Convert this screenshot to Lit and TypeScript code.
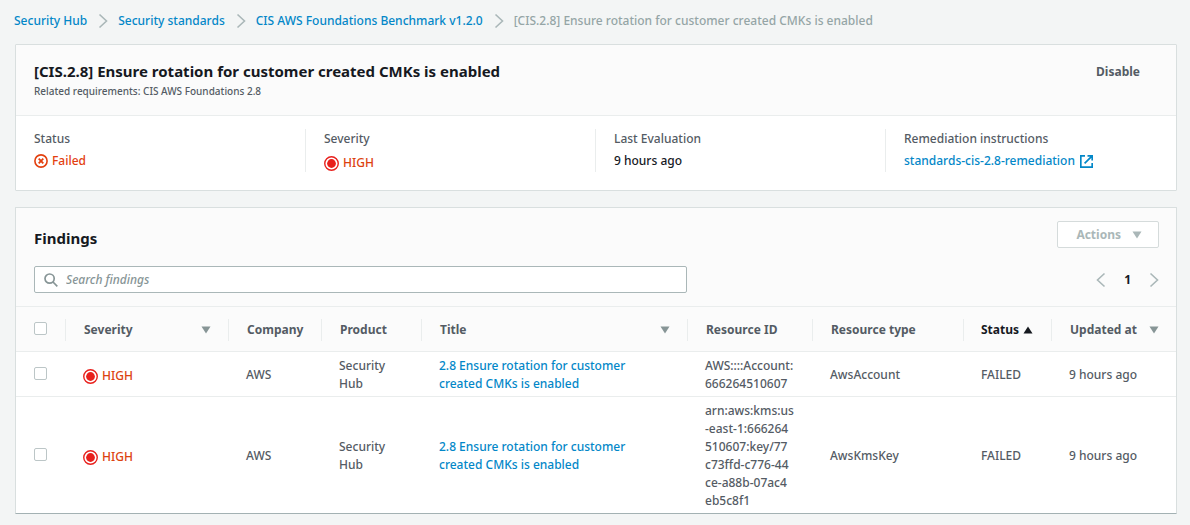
import { LitElement, html, css, svg } from "lit";
import { customElement } from "lit/decorators.js";

interface Finding {
  id: string;
  resource: string[];
  type: string;
}

const findings: Finding[] = [
  { id: "account", resource: ["AWS::::Account:", "666264510607"], type: "AwsAccount" },
  {
    id: "key",
    resource: ["arn:aws:kms:us", "-east-1:666264", "510607:key/77", "c73ffd-c776-44", "ce-a88b-07ac4", "eb5c8f1"],
    type: "AwsKmsKey",
  },
];

const columns = [
  { key: "severity", label: "Severity", sort: "down" },
  { key: "company", label: "Company", sort: "" },
  { key: "product", label: "Product", sort: "" },
  { key: "title", label: "Title", sort: "down" },
  { key: "resource", label: "Resource ID", sort: "" },
  { key: "type", label: "Resource type", sort: "" },
  { key: "status", label: "Status", sort: "up" },
  { key: "updated", label: "Updated at", sort: "down" },
];

const chevron = (dir: "left" | "right") => html`<svg class="chevron" viewBox="0 0 10 16" aria-hidden="true">
  ${dir === "right" ? svg`<path d="M1.5 1.5 8.5 8l-7 6.5" />` : svg`<path d="M8.5 1.5 1.5 8l7 6.5" />`}
</svg>`;

const triangle = (dir: string) => html`<svg class="triangle" viewBox="0 0 10 8" aria-hidden="true">
  ${dir === "up" ? svg`<path d="M.5 7.5 5 .5l4.5 7z" />` : svg`<path d="M.5.5 5 7.5 9.5.5z" />`}
</svg>`;

const high = html`<span class="high">
  <svg class="target" viewBox="0 0 14 14" aria-hidden="true">
    <circle cx="7" cy="7" r="6.3" fill="none" stroke-width="1.3" />
    <circle cx="7" cy="7" r="4.1" class="dot" />
  </svg>HIGH</span>`;

@customElement("app-root")
export class AppRoot extends LitElement {
  static styles = css`
    :host {
      display: block;
      box-sizing: border-box;
      min-height: 100vh;
      padding: 12px 13px 11px 15px;
      background: #f3f5f5;
      color: #16191f;
      font: 500 12px/18px "Noto Sans", "Open Sans", sans-serif;
    }
    * {
      box-sizing: border-box;
    }
    svg {
      display: block;
      flex: none;
    }
    a {
      color: #0387c8;
      text-decoration: none;
    }
    button {
      font: inherit;
      color: inherit;
      background: none;
      border: 0;
      padding: 0;
    }
    h1, h2, p, dl, dd, ol {
      margin: 0;
      padding: 0;
    }
    .crumbs ol {
      display: flex;
      align-items: center;
      margin-left: -1px;
      list-style: none;
      color: #95a5a6;
    }
    .crumbs li {
      display: flex;
      align-items: center;
    }
    .crumbs .chevron {
      margin: 0 10px 0 11px;
    }
    .chevron {
      width: 10px;
      height: 16px;
      fill: none;
      stroke: #aab7b8;
      stroke-width: 1.6;
    }
    .triangle {
      width: 10px;
      height: 8px;
      fill: #879596;
    }
    .panel {
      background: #fff;
      border: 1px solid #d9dfdf;
      border-radius: 1px;
    }
    .summary {
      margin-top: 14px;
    }
    .summary-head {
      display: flex;
      justify-content: space-between;
      align-items: flex-start;
      padding: 16px 36px 14px 18px;
      background: #fbfbfb;
      border-bottom: 1px solid #eaeded;
    }
    h1, h2 {
      font-size: 15px;
      line-height: 20px;
      font-weight: 700;
    }
    .sub {
      font-size: 10px;
      line-height: 20px;
      color: #545b64;
    }
    .disable {
      font-weight: 700;
      line-height: 22px;
      color: #545b64;
    }
    .facts {
      display: grid;
      grid-template-columns: repeat(4, 1fr);
      padding: 13px 0 18px;
    }
    .fact {
      padding: 0 18px;
      height: 43px;
      border-right: 1px solid #eaeded;
    }
    .fact:last-child {
      border-right: 0;
    }
    .fact dt {
      line-height: 20px;
      color: #545b64;
    }
    .fact dd {
      display: flex;
      align-items: center;
      line-height: 24px;
    }
    .failed {
      display: flex;
      align-items: center;
      gap: 4px;
      color: #e3400f;
    }
    .failed svg {
      width: 14px;
      height: 14px;
      fill: none;
      stroke: currentColor;
    }
    .high {
      display: flex;
      align-items: center;
      gap: 4px;
      padding-top: 2px;
      color: #dc420f;
    }
    .target {
      width: 15px;
      height: 15px;
      stroke: #e8201c;
    }
    .dot {
      fill: #e8201c;
      stroke: none;
    }
    .external {
      display: flex;
      align-items: center;
      gap: 5px;
    }
    .external svg {
      width: 13px;
      height: 13px;
      fill: none;
      stroke: currentColor;
      stroke-width: 1.7;
    }
    .findings {
      margin-top: 16px;
      border-bottom-color: #a3b1b3;
    }
    .findings-head {
      padding: 13px 17px 13px 18px;
      background: #fbfbfb;
      border-bottom: 1px solid #eaeded;
    }
    .bar {
      display: flex;
      justify-content: space-between;
      align-items: flex-end;
    }
    .bar + .bar {
      margin-top: 18px;
      align-items: center;
    }
    .actions {
      display: flex;
      align-items: center;
      gap: 11px;
      height: 27px;
      padding: 0 16px 0 18px;
      background: #fff;
      border: 1px solid #d5dbdb;
      border-radius: 2px;
      color: #aab7b8;
      font-weight: 700;
    }
    .actions .triangle {
      fill: #aab7b8;
    }
    .search {
      display: flex;
      align-items: center;
      gap: 8px;
      width: 58%;
      height: 27px;
      padding: 0 9px;
      background: #fff;
      border: 1px solid #aab7b8;
      border-radius: 2px;
    }
    .search svg {
      width: 14px;
      height: 14px;
      fill: none;
      stroke: #879596;
      stroke-width: 1.7;
    }
    .search input {
      flex: 1;
      min-width: 0;
      border: 0;
      padding: 0;
      outline: 0;
      background: none;
      font: inherit;
    }
    .search input::placeholder {
      color: #879596;
      opacity: 1;
      font-style: italic;
    }
    .pages {
      display: flex;
      align-items: center;
      gap: 18px;
      font-weight: 700;
    }
    table {
      width: 100%;
      table-layout: fixed;
      border-collapse: separate;
      border-spacing: 0;
      color: #545b64;
    }
    .c-check { width: 49px; }
    .c-severity { width: 163px; }
    .c-company { width: 93px; }
    .c-product { width: 100px; }
    .c-title { width: 266px; }
    .c-resource { width: 125px; }
    .c-type { width: 151px; }
    .c-status { width: 88px; }
    .c-updated { width: 125px; }
    th {
      height: 45px;
      padding: 2px 0 0;
      text-align: left;
      font-weight: 700;
      background: #fbfbfb;
      border-bottom: 1px solid #eaeded;
    }
    .th {
      display: flex;
      align-items: center;
      justify-content: space-between;
      height: 22px;
      padding: 0 17px 0 18px;
      border-left: 1px solid #eaeded;
      white-space: nowrap;
    }
    .th.sorted {
      justify-content: flex-start;
      gap: 4px;
      padding: 0 0 0 17px;
      color: #16191f;
    }
    .sorted .triangle {
      fill: #16191f;
    }
    td {
      padding: 5px 12px 3px 18px;
      vertical-align: middle;
    }
    tr + tr td {
      border-top: 1px solid #eaeded;
    }
    .title {
      padding-right: 48px;
    }
    .res {
      padding-right: 0;
      white-space: nowrap;
    }
    th.pick, td.pick {
      padding: 0 0 2px 18px;
    }
    .pick input {
      display: block;
      appearance: none;
      width: 13px;
      height: 13px;
      margin: 0;
      background: #fff;
      border: 1px solid #bcc6c7;
      border-radius: 2px;
    }
  `;

  render() {
    return html`
      <nav class="crumbs" aria-label="Breadcrumb">
        <ol>
          <li><a href="#hub">Security Hub</a>${chevron("right")}</li>
          <li><a href="#standards">Security standards</a>${chevron("right")}</li>
          <li><a href="#cis">CIS AWS Foundations Benchmark v1.2.0</a>${chevron("right")}</li>
          <li>[CIS.2.8] Ensure rotation for customer created CMKs is enabled</li>
        </ol>
      </nav>

      <section class="panel summary">
        <header class="summary-head">
          <div>
            <h1>[CIS.2.8] Ensure rotation for customer created CMKs is enabled</h1>
            <p class="sub">Related requirements: CIS AWS Foundations 2.8</p>
          </div>
          <button class="disable" type="button">Disable</button>
        </header>
        <dl class="facts">
          <div class="fact">
            <dt>Status</dt>
            <dd>
              <span class="failed">
                <svg viewBox="0 0 14 14" aria-hidden="true">
                  <circle cx="7" cy="7" r="6.1" stroke-width="1.6" />
                  <path d="m4.7 4.7 4.6 4.6m0-4.6L4.7 9.3" stroke-width="1.8" />
                </svg>Failed</span>
            </dd>
          </div>
          <div class="fact">
            <dt>Severity</dt>
            <dd>${high}</dd>
          </div>
          <div class="fact">
            <dt>Last Evaluation</dt>
            <dd>9 hours ago</dd>
          </div>
          <div class="fact">
            <dt>Remediation instructions</dt>
            <dd>
              <a class="external" href="#remediation">standards-cis-2.8-remediation<svg viewBox="0 0 13 13" aria-hidden="true">
                  <path d="M5 .8H.8v11.4h11.4V8M7.5.8h4.7v4.7M12.2.8 4.6 8.4" />
                </svg></a>
            </dd>
          </div>
        </dl>
      </section>

      <section class="panel findings">
        <header class="findings-head">
          <div class="bar">
            <h2>Findings</h2>
            <button class="actions" type="button" disabled>Actions ${triangle("down")}</button>
          </div>
          <div class="bar">
            <label class="search">
              <svg viewBox="0 0 14 14" aria-hidden="true">
                <circle cx="5.6" cy="5.6" r="4.6" />
                <path d="m9 9 4.3 4.3" />
              </svg>
              <input type="search" placeholder="Search findings" aria-label="Search findings" />
            </label>
            <div class="pages">
              <button type="button" aria-label="Previous page">${chevron("left")}</button>
              <span>1</span>
              <button type="button" aria-label="Next page">${chevron("right")}</button>
            </div>
          </div>
        </header>
        <table>
          <colgroup>
            <col class="c-check" />
            ${columns.map((c) => html`<col class="c-${c.key}" />`)}
          </colgroup>
          <thead>
            <tr>
              <th class="pick"><input type="checkbox" aria-label="Select all findings" /></th>
              ${columns.map(
                (c) => html`<th scope="col">
                  <div class="th ${c.sort === "up" ? "sorted" : ""}">${c.label}${c.sort ? triangle(c.sort) : ""}</div>
                </th>`
              )}
            </tr>
          </thead>
          <tbody>
            ${findings.map(
              (f) => html`<tr>
                <td class="pick"><input type="checkbox" aria-label="Select finding ${f.id}" /></td>
                <td>${high}</td>
                <td>AWS</td>
                <td>Security Hub</td>
                <td class="title"><a href="#finding-${f.id}">2.8 Ensure rotation for customer created CMKs is enabled</a></td>
                <td class="res">${f.resource.map((line, i) => html`${i ? html`<br />` : ""}${line}`)}</td>
                <td>${f.type}</td>
                <td>FAILED</td>
                <td>9 hours ago</td>
              </tr>`
            )}
          </tbody>
        </table>
      </section>
    `;
  }
}
